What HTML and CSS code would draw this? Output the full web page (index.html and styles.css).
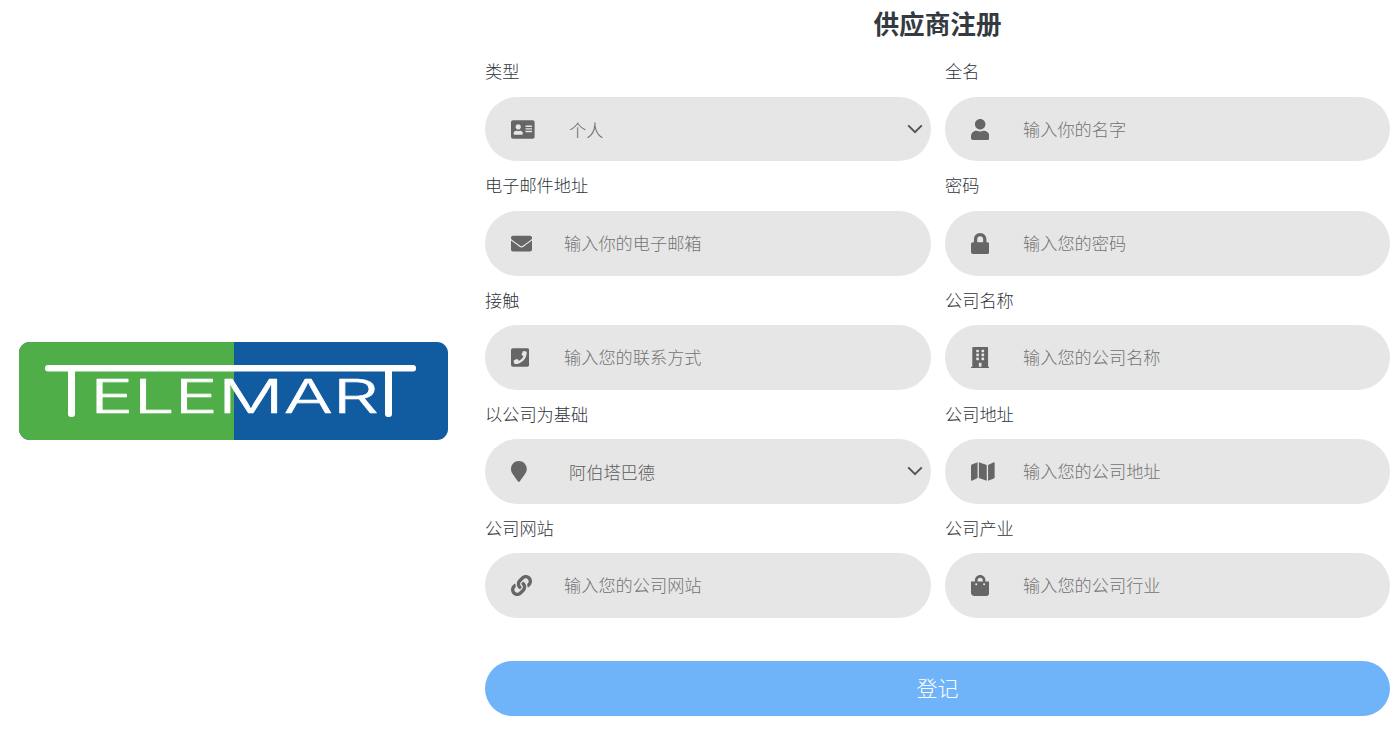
FILE: index.html
```html
<!DOCTYPE html>
<html lang="zh">
<head>
<meta charset="utf-8">
<title>供应商注册</title>
<link rel="stylesheet" href="styles.css">
</head>
<body>
<div class="page">
  <aside class="brand">
    <svg class="logo" viewBox="0 0 429 98" role="img" aria-label="Telemart">
      <rect class="logo-blue" width="429" height="98" rx="11"/>
      <path class="logo-green" d="M215 0H11A11 11 0 0 0 0 11V87A11 11 0 0 0 11 98H215Z"/>
      <rect class="logo-line" x="26" y="23" width="371" height="6.5" rx="3"/>
      <rect class="logo-line" x="49" y="25" width="7" height="50" rx="3"/>
      <rect class="logo-line" x="366" y="25" width="7" height="50" rx="3"/>
      <text class="logo-text" x="71" y="71" textLength="289" lengthAdjust="spacingAndGlyphs">ELEMAR</text>
    </svg>
  </aside>
  <main class="panel">
    <h1 class="title">供应商注册</h1>
    <form class="form">
      <div class="grid">
        <div class="field">
          <label class="label">类型</label>
          <div class="control">
            <svg class="icon" viewBox="0 0 576 512"><path d="M528 32H48C21.5 32 0 53.5 0 80v352c0 26.5 21.5 48 48 48h480c26.5 0 48-21.5 48-48V80c0-26.5-21.5-48-48-48zm-352 96c35.3 0 64 28.7 64 64s-28.7 64-64 64-64-28.7-64-64 28.7-64 64-64zm112 236.8c0 10.6-10 19.2-22.4 19.2H86.4C74 384 64 375.4 64 364.8v-19.2c0-31.8 30.1-57.6 67.2-57.6h5c12.3 5.1 25.7 8 39.8 8s27.6-2.9 39.8-8h5c37.1 0 67.2 25.8 67.2 57.6v19.2zM512 312c0 4.4-3.6 8-8 8H360c-4.4 0-8-3.6-8-8v-16c0-4.4 3.6-8 8-8h144c4.4 0 8 3.6 8 8v16zm0-64c0 4.4-3.6 8-8 8H360c-4.4 0-8-3.6-8-8v-16c0-4.4 3.6-8 8-8h144c4.4 0 8 3.6 8 8v16zm0-64c0 4.4-3.6 8-8 8H360c-4.4 0-8-3.6-8-8v-16c0-4.4 3.6-8 8-8h144c4.4 0 8 3.6 8 8v16z"/></svg>
            <select class="select"><option>个人</option></select>
            <svg class="chevron" viewBox="0 0 16 10"><path d="M1.2 1.4 8 8.2l6.8-6.8"/></svg>
          </div>
        </div>
        <div class="field">
          <label class="label">全名</label>
          <div class="control">
            <svg class="icon" viewBox="0 0 448 512"><path d="M224 256c70.7 0 128-57.3 128-128S294.7 0 224 0 96 57.3 96 128s57.3 128 128 128zm89.6 32h-16.7c-22.2 10.2-46.9 16-72.9 16s-50.6-5.8-72.9-16h-16.7C60.2 288 0 348.2 0 422.4V464c0 26.5 21.5 48 48 48h352c26.5 0 48-21.5 48-48v-41.6c0-74.2-60.2-134.4-134.4-134.4z"/></svg>
            <input class="input input-right" placeholder="输入你的名字">
          </div>
        </div>
        <div class="field">
          <label class="label">电子邮件地址</label>
          <div class="control">
            <svg class="icon" viewBox="0 0 512 512"><path d="M502.3 190.8c3.9-3.1 9.7-.2 9.7 4.7V400c0 26.5-21.5 48-48 48H48c-26.5 0-48-21.5-48-48V195.6c0-5 5.7-7.8 9.7-4.7 22.4 17.4 52.1 39.5 154.1 113.6 21.1 15.4 56.7 47.8 92.2 47.6 35.7.3 72-32.8 92.3-47.6 102-74.1 131.6-96.3 154-113.7zM256 320c23.2.4 56.6-29.2 73.4-41.4 132.7-96.3 142.8-104.7 173.4-128.7 5.8-4.5 9.2-11.5 9.2-18.9v-19c0-26.5-21.5-48-48-48H48C21.5 64 0 85.5 0 112v19c0 7.4 3.4 14.3 9.2 18.9 30.6 23.9 40.7 32.4 173.4 128.7 16.8 12.2 50.2 41.8 73.4 41.4z"/></svg>
            <input class="input" placeholder="输入你的电子邮箱">
          </div>
        </div>
        <div class="field">
          <label class="label">密码</label>
          <div class="control">
            <svg class="icon" viewBox="0 0 448 512"><path d="M400 224h-24v-72C376 68.2 307.8 0 224 0S72 68.2 72 152v72H48c-26.5 0-48 21.5-48 48v192c0 26.5 21.5 48 48 48h352c26.5 0 48-21.5 48-48V272c0-26.5-21.5-48-48-48zm-104 0H152v-72c0-39.7 32.3-72 72-72s72 32.3 72 72v72z"/></svg>
            <input class="input input-right" placeholder="输入您的密码">
          </div>
        </div>
        <div class="field">
          <label class="label">接触</label>
          <div class="control">
            <svg class="icon" viewBox="0 0 448 512"><path d="M400 32H48C21.49 32 0 53.49 0 80v352c0 26.51 21.49 48 48 48h352c26.51 0 48-21.49 48-48V80c0-26.51-21.49-48-48-48zM94 416c-7.033 0-13.057-4.873-14.616-11.627l-14.998-65a15 15 0 0 1 8.707-17.16l69.998-29.999a15 15 0 0 1 17.518 4.289l30.997 37.885c48.944-22.963 88.297-62.858 110.781-110.78l-37.886-30.997a15.001 15.001 0 0 1-4.289-17.518l30-69.998a15 15 0 0 1 17.16-8.707l65 14.998A14.997 14.997 0 0 1 384 126c0 160.292-129.945 290-290 290z"/></svg>
            <input class="input" placeholder="输入您的联系方式">
          </div>
        </div>
        <div class="field">
          <label class="label">公司名称</label>
          <div class="control">
            <svg class="icon" viewBox="0 0 448 512"><path d="M436 480h-20V24c0-13.255-10.745-24-24-24H56C42.745 0 32 10.745 32 24v456H12c-6.627 0-12 5.373-12 12v20h448v-20c0-6.627-5.373-12-12-12zM128 76c0-6.627 5.373-12 12-12h40c6.627 0 12 5.373 12 12v40c0 6.627-5.373 12-12 12h-40c-6.627 0-12-5.373-12-12V76zm0 96c0-6.627 5.373-12 12-12h40c6.627 0 12 5.373 12 12v40c0 6.627-5.373 12-12 12h-40c-6.627 0-12-5.373-12-12v-40zm52 148h-40c-6.627 0-12-5.373-12-12v-40c0-6.627 5.373-12 12-12h40c6.627 0 12 5.373 12 12v40c0 6.627-5.373 12-12 12zm76 160h-64v-84c0-6.627 5.373-12 12-12h40c6.627 0 12 5.373 12 12v84zm64-172c0 6.627-5.373 12-12 12h-40c-6.627 0-12-5.373-12-12v-40c0-6.627 5.373-12 12-12h40c6.627 0 12 5.373 12 12v40zm0-96c0 6.627-5.373 12-12 12h-40c-6.627 0-12-5.373-12-12v-40c0-6.627 5.373-12 12-12h40c6.627 0 12 5.373 12 12v40zm0-96c0 6.627-5.373 12-12 12h-40c-6.627 0-12-5.373-12-12V76c0-6.627 5.373-12 12-12h40c6.627 0 12 5.373 12 12v40z"/></svg>
            <input class="input input-right" placeholder="输入您的公司名称">
          </div>
        </div>
        <div class="field">
          <label class="label">以公司为基础</label>
          <div class="control">
            <svg class="icon" viewBox="0 0 384 512"><path d="M172.268 501.67C26.97 291.031 0 269.413 0 192 0 85.961 85.961 0 192 0s192 85.961 192 192c0 77.413-26.97 99.031-172.268 309.67-9.535 13.774-29.93 13.773-39.464 0z"/></svg>
            <select class="select"><option>阿伯塔巴德</option></select>
            <svg class="chevron" viewBox="0 0 16 10"><path d="M1.2 1.4 8 8.2l6.8-6.8"/></svg>
          </div>
        </div>
        <div class="field">
          <label class="label">公司地址</label>
          <div class="control">
            <svg class="icon" viewBox="0 0 576 512"><path d="M0 117.66v346.32c0 11.32 11.43 19.06 21.94 14.86L160 416V32L20.12 87.95A32.006 32.006 0 0 0 0 117.66zM192 416l192 64V96L192 32v384zM554.06 33.16L416 96v384l139.88-55.95A31.996 31.996 0 0 0 576 394.34V48.02c0-11.32-11.43-19.06-21.94-14.86z"/></svg>
            <input class="input input-right" placeholder="输入您的公司地址">
          </div>
        </div>
        <div class="field">
          <label class="label">公司网站</label>
          <div class="control">
            <svg class="icon" viewBox="0 0 512 512"><path d="M326.612 185.391c59.747 59.809 58.927 155.698.36 214.59-.11.12-.24.25-.36.37l-67.2 67.2c-59.27 59.27-155.699 59.262-214.96 0-59.27-59.26-59.27-155.7 0-214.96l37.106-37.106c9.84-9.84 26.786-3.3 27.294 10.606.648 17.722 3.826 35.527 9.69 52.721 1.986 5.822.567 12.262-3.783 16.612l-13.087 13.087c-28.026 28.026-28.905 73.66-1.155 101.96 28.024 28.579 74.086 28.749 102.325.51l67.2-67.19c28.191-28.191 28.073-73.757 0-101.83-3.701-3.694-7.429-6.564-10.341-8.569a16.037 16.037 0 0 1-6.947-12.606c-.396-10.567 3.348-21.456 11.698-29.806l21.054-21.055c5.521-5.521 14.182-6.199 20.584-1.731a152.482 152.482 0 0 1 20.522 17.197zM467.547 44.449c-59.261-59.262-155.69-59.27-214.96 0l-67.2 67.2c-.12.12-.25.25-.36.37-58.566 58.892-59.387 154.781.36 214.59a152.454 152.454 0 0 0 20.521 17.196c6.402 4.468 15.064 3.789 20.584-1.731l21.054-21.055c8.35-8.35 12.094-19.239 11.698-29.806a16.037 16.037 0 0 0-6.947-12.606c-2.912-2.005-6.64-4.875-10.341-8.569-28.073-28.073-28.191-73.639 0-101.83l67.2-67.19c28.239-28.239 74.3-28.069 102.325.51 27.75 28.3 26.872 73.934-1.155 101.96l-13.087 13.087c-4.35 4.35-5.769 10.79-3.783 16.612 5.864 17.194 9.042 34.999 9.69 52.721.509 13.906 17.454 20.446 27.294 10.606l37.106-37.106c59.271-59.259 59.271-155.699.001-214.959z"/></svg>
            <input class="input" placeholder="输入您的公司网站">
          </div>
        </div>
        <div class="field">
          <label class="label">公司产业</label>
          <div class="control">
            <svg class="icon" viewBox="0 0 448 512"><path d="M352 160v-32C352 57.42 294.579 0 224 0 153.42 0 96 57.42 96 128v32H0v272c0 44.183 35.817 80 80 80h288c44.183 0 80-35.817 80-80V160h-96zm-192-32c0-35.29 28.71-64 64-64s64 28.71 64 64v32H160v-32zm160 120c-13.255 0-24-10.745-24-24s10.745-24 24-24 24 10.745 24 24-10.745 24-24 24zm-192 0c-13.255 0-24-10.745-24-24s10.745-24 24-24 24 10.745 24 24-10.745 24-24 24z"/></svg>
            <input class="input input-right" placeholder="输入您的公司行业">
          </div>
        </div>
      </div>
      <button class="submit" type="button">登记</button>
    </form>
  </main>
</div>
</body>
</html>
```
FILE: styles.css
```css
* { box-sizing: border-box; }
html, body { margin: 0; padding: 0; background: #fff; }
body {
  font-family: "Noto Sans CJK SC", "Liberation Sans", sans-serif;
  font-weight: 300;
  color: #2f353c;
  overflow: hidden;
}
.page {
  display: flex;
  height: 736px;
  padding-right: 9px;
}
.brand {
  flex: 0 0 485px;
  display: flex;
  align-items: center;
  padding: 45px 37px 0 19px;
}
.logo { display: block; width: 429px; height: 98px; filter: blur(0.6px); }
.logo-blue { fill: #115ba0; }
.logo-green { fill: #4fae48; }
.logo-line { fill: #fff; }
.logo-text {
  fill: #fff;
  stroke: #fff;
  stroke-width: 0.6;
  stroke-linejoin: round;
  font-family: "Inter", "Liberation Sans", sans-serif;
  font-weight: 300;
  font-size: 46px;
}
.panel { flex: 1; min-width: 0; }
.title {
  margin: 0;
  height: 47.35px;
  font-size: 25.6px;
  font-weight: 700;
  line-height: 46px;
  text-align: center;
  color: #343a40;
}
.grid {
  display: grid;
  grid-template-columns: 446px 445px;
  column-gap: 14px;
}
.field { display: flex; flex-direction: column; }
.label {
  height: 49.3px;
  display: flex;
  align-items: center;
  font-size: 17.2px;
  line-height: 1;
  padding-bottom: 2px;
}
.control {
  position: relative;
  display: flex;
  align-items: center;
  height: 64.8px;
  padding-left: 26px;
  background: #e6e6e6;
  border-radius: 32.4px;
}
.icon {
  flex: none;
  height: 21px;
  width: auto;
  margin-top: 1px;
  fill: #666;
}
.input, .select {
  position: absolute;
  top: 0;
  bottom: 0;
  right: 0;
  border: 0;
  outline: 0;
  background: transparent;
  font: inherit;
  font-size: 17.2px;
  color: #5c5c5c;
  padding: 0;
}
.input { left: 79px; width: calc(100% - 79px); padding-bottom: 1px; }
.input-right { left: 78px; width: calc(100% - 78px); }
.input::placeholder { color: #737373; opacity: 1; }
.select {
  left: 84px;
  width: calc(100% - 84px);
  appearance: none;
  -webkit-appearance: none;
}
.chevron {
  position: absolute;
  right: 8px;
  top: 50%;
  width: 16px;
  height: 10px;
  margin-top: -5px;
  fill: none;
  stroke: #555;
  stroke-width: 2;
  pointer-events: none;
}
.submit {
  display: block;
  width: 100%;
  height: 55px;
  margin-top: 43.2px;
  border: 0;
  border-radius: 27.5px;
  background: #6fb4f8;
  color: #fff;
  font: inherit;
  font-size: 21px;
  padding: 0 0 4px 0;
}
```
